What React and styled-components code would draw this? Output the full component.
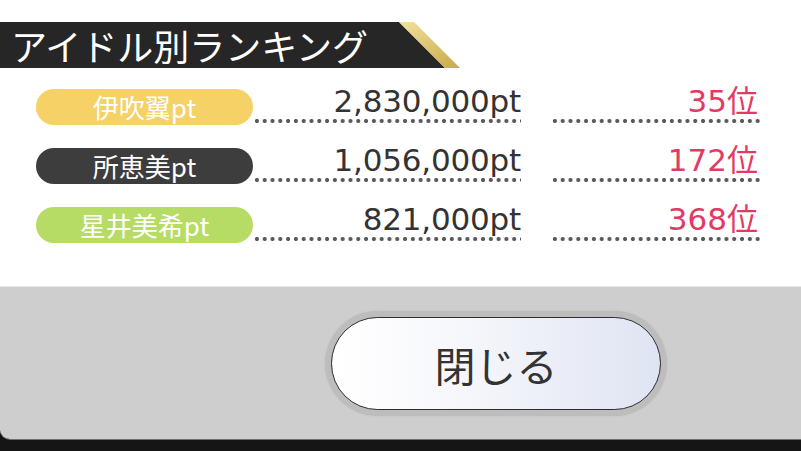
import React from "react";
import styled, { createGlobalStyle } from "styled-components";

const GlobalStyle = createGlobalStyle`
  html, body {
    margin: 0;
    padding: 0;
    background: #151515;
    overflow: hidden;
  }
  body {
    font-family: "Noto Sans CJK JP", "Noto Sans", sans-serif;
  }
`;

const rows = [
  { name: "伊吹翼pt", color: "#f5d166", points: "2,830,000pt", rank: "35位" },
  { name: "所恵美pt", color: "#3d3d3d", points: "1,056,000pt", rank: "172位" },
  { name: "星井美希pt", color: "#b7dc66", points: "821,000pt", rank: "368位" },
];

export default function App() {
  return (
    <>
      <GlobalStyle />
      <Dialog>
        <Body>
          <TitleBar>
            <TitleText>アイドル別ランキング</TitleText>
            <TitleEdge viewBox="0 0 64 46" preserveAspectRatio="none">
              <defs>
                <linearGradient id="gold" x1="0" y1="0" x2="1" y2="1">
                  <stop offset="0" stopColor="#f1e2a0" />
                  <stop offset="0.6" stopColor="#d9c06a" />
                  <stop offset="1" stopColor="#c9a94a" />
                </linearGradient>
              </defs>
              <polygon points="0,0 0,46 47,46 1,0" fill="#262626" />
              <polygon points="1,0 16,0 62,46 47,46" fill="url(#gold)" />
            </TitleEdge>
          </TitleBar>

          <List>
            {rows.map((r) => (
              <Row key={r.name}>
                <Pill $color={r.color}>{r.name}</Pill>
                <Leader $width={268}>
                  <Points>{r.points}</Points>
                </Leader>
                <Leader $width={209} $gap={30}>
                  <Rank>{r.rank}</Rank>
                </Leader>
              </Row>
            ))}
          </List>
        </Body>

        <Footer>
          <CloseRing>
            <CloseButton>閉じる</CloseButton>
          </CloseRing>
        </Footer>
      </Dialog>
    </>
  );
}

const Dialog = styled.div`
  width: 100%;
  height: 439px;
  display: flex;
  flex-direction: column;
  border-radius: 0 0 0 10px;
  overflow: hidden;
  border-bottom: 1px solid #6e6e6e;
`;

const Body = styled.div`
  height: 287px;
  background: #ffffff;
  padding-top: 22px;
  box-sizing: border-box;
  border-bottom: 1px solid #e6e6e6;
`;

const TitleBar = styled.div`
  display: flex;
  height: 46px;
`;

const TitleText = styled.div`
  width: 398px;
  height: 46px;
  background: #262626;
  color: #ffffff;
  font-size: 36px;
  line-height: 46px;
  padding-left: 11px;
  box-sizing: border-box;
  white-space: nowrap;
`;

const TitleEdge = styled.svg`
  width: 64px;
  height: 46px;
  display: block;
`;

const List = styled.div`
  display: flex;
  flex-direction: column;
  gap: 23px;
  padding: 21px 0 0 36px;
`;

const Row = styled.div`
  display: flex;
  align-items: stretch;
  height: 36px;
`;

const Pill = styled.div`
  width: 217px;
  height: 36px;
  border-radius: 18px;
  background: ${(p) => p.$color};
  color: #ffffff;
  font-size: 26px;
  line-height: 36px;
  text-align: center;
`;

const Leader = styled.div`
  width: ${(p) => p.$width}px;
  margin-left: ${(p) => p.$gap || 0}px;
  display: flex;
  justify-content: flex-end;
  align-items: flex-end;
  background-image: radial-gradient(circle, #5a5a5a 1.8px, transparent 2.3px);
  background-size: 7.8px 8px;
  background-repeat: repeat-x;
  background-position: 0 100%;
  padding-bottom: 8px;
  box-sizing: border-box;
`;

const Points = styled.span`
  font-family: "DejaVu Sans", "Noto Sans CJK JP", sans-serif;
  font-size: 31px;
  line-height: 1;
  color: #333333;
  letter-spacing: -0.2px;
`;

const Rank = styled.span`
  font-family: "DejaVu Sans", "Noto Sans CJK JP", sans-serif;
  font-size: 31px;
  line-height: 1;
  color: #e23a63;
  margin-right: 2px;
`;

const Footer = styled.div`
  flex: 1;
  background: #cecece;
  display: flex;
  align-items: center;
  padding-left: 325px;
`;

const CloseRing = styled.div`
  padding: 6px;
  border-radius: 60px;
  background: #bdbdbd;
  box-shadow: 0 0 2px #bdbdbd;
`;

const CloseButton = styled.div`
  width: 330px;
  height: 93px;
  box-sizing: border-box;
  border: 1.5px solid #2e2e2e;
  border-radius: 47px;
  background: linear-gradient(90deg, #ffffff 0%, #f6f7fb 40%, #dfe4f3 100%);
  color: #333333;
  font-size: 41px;
  padding-top: 2px;
  display: flex;
  align-items: center;
  justify-content: center;
`;
